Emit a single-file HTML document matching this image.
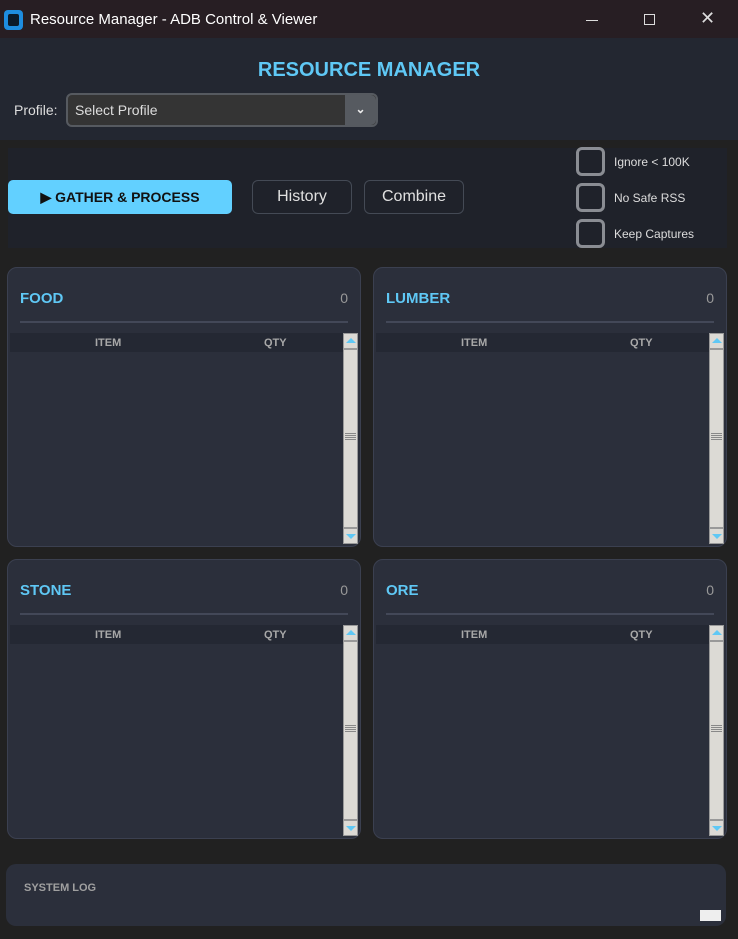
<!DOCTYPE html><html><head><style>
*{margin:0;padding:0;box-sizing:border-box}
body{width:738px;height:939px;background:#212121;font-family:"Liberation Sans",sans-serif;position:relative;overflow:hidden;color:#ddd}
.abs{position:absolute}
.tb{left:0;top:0;width:738px;height:38px;background:#271e23}
.hd{left:0;top:38px;width:738px;height:102px;background:#232731}
.card{background:#2b2f3b;border:1px solid #3b4050;border-radius:10px;width:354px;height:280px}
.ct{position:absolute;left:12px;top:22px;font-weight:bold;color:#5fc8f5;font-size:15px}
.cn{position:absolute;right:12px;top:22px;color:#999;font-size:14px}
.ln{position:absolute;left:12px;right:12px;top:53px;height:2px;background:#434858}
.th{position:absolute;left:2px;width:335px;top:65px;height:19px;background:#242833;font-size:11px;font-weight:bold;color:#a8a8a8}
.sb{position:absolute;left:335px;top:65px;width:15px;height:211px;background:#dcdad5;border:1px solid #999}
.sb .u,.sb .d{position:absolute;left:2px;width:0;height:0;border-left:5px solid transparent;border-right:5px solid transparent}
.sb .u{top:4px;border-bottom:5px solid #5fc8f5}
.sb .d{bottom:4px;border-top:5px solid #5fc8f5}
.sb .g{position:absolute;left:1px;right:1px;top:99px;height:8px;background:repeating-linear-gradient(#888 0 1px,transparent 1px 2px)}
.sb .h1{position:absolute;left:0;right:0;top:14px;height:2px;background:#999}
.sb .h2{position:absolute;left:0;right:0;bottom:14px;height:2px;background:#999}
.btn{border:1px solid #444a55;border-radius:6px;background:#1f222a;color:#e0e0e0;font-size:16px;text-align:center;line-height:32px;height:34px}
.cb{width:29px;height:29px;border:3px solid #8a8d93;border-radius:6px}
.cl{font-size:12px;color:#ddd}
</style></head><body>
<div class="abs tb"></div>
<div class="abs" style="left:4px;top:10px;width:19px;height:20px;background:#1e8de0;border-radius:4px"><div style="margin:4px;width:11px;height:12px;background:#0b1a2a;border-radius:2px"></div></div>
<div class="abs" style="left:30px;top:11px;font-size:15px;color:#fff">Resource Manager - ADB Control &amp; Viewer</div>
<div class="abs" style="left:586px;top:20px;width:12px;height:1px;background:#ddd"></div>
<div class="abs" style="left:644px;top:14px;width:11px;height:11px;border:1px solid #ddd"></div>
<div class="abs" style="left:700px;top:8px;font-size:18px;color:#ddd">✕</div>
<div class="abs hd"></div>
<div class="abs" style="left:0;width:738px;top:59px;text-align:center;font-size:20px;font-weight:bold;color:#5fc8f5">RESOURCE MANAGER</div>
<div class="abs" style="left:14px;top:102px;font-size:14px;color:#ddd">Profile:</div>
<div class="abs" style="left:66px;top:93px;width:312px;height:34px;background:#343434;border:2px solid #565a60;border-radius:6px"></div>
<div class="abs" style="left:345px;top:95px;width:31px;height:30px;background:#565a60;border-radius:0 5px 5px 0;color:#eee;font-size:12px;font-weight:bold;text-align:center;line-height:28px">⌄</div>
<div class="abs" style="left:75px;top:102px;font-size:14px;color:#ddd">Select Profile</div>
<div class="abs" style="left:8px;top:148px;width:719px;height:100px;background:#1f222a"></div>
<div class="abs" style="left:8px;top:180px;width:224px;height:34px;background:#62d0ff;border-radius:5px;color:#111;font-weight:bold;font-size:14px;text-align:center;line-height:34px">▶ GATHER &amp; PROCESS</div>
<div class="abs btn" style="left:252px;top:180px;width:100px">History</div>
<div class="abs btn" style="left:364px;top:180px;width:100px">Combine</div>
<div class="abs cb" style="left:576px;top:147px"></div><div class="abs cl" style="left:614px;top:155px">Ignore &lt; 100K</div>
<div class="abs cb" style="left:576px;top:183px"></div><div class="abs cl" style="left:614px;top:191px">No Safe RSS</div>
<div class="abs cb" style="left:576px;top:219px"></div><div class="abs cl" style="left:614px;top:227px">Keep Captures</div>

<div class="abs card" style="left:7px;top:267px"><div class="ct">FOOD</div><div class="cn">0</div><div class="ln"></div><div class="th"><span class="abs" style="left:85px;top:4px">ITEM</span><span class="abs" style="left:254px;top:4px">QTY</span></div><div class="sb"><div class="u"></div><div class="h1"></div><div class="g"></div><div class="h2"></div><div class="d"></div></div></div>
<div class="abs card" style="left:373px;top:267px"><div class="ct">LUMBER</div><div class="cn">0</div><div class="ln"></div><div class="th"><span class="abs" style="left:85px;top:4px">ITEM</span><span class="abs" style="left:254px;top:4px">QTY</span></div><div class="sb"><div class="u"></div><div class="h1"></div><div class="g"></div><div class="h2"></div><div class="d"></div></div></div>
<div class="abs card" style="left:7px;top:559px"><div class="ct">STONE</div><div class="cn">0</div><div class="ln"></div><div class="th"><span class="abs" style="left:85px;top:4px">ITEM</span><span class="abs" style="left:254px;top:4px">QTY</span></div><div class="sb"><div class="u"></div><div class="h1"></div><div class="g"></div><div class="h2"></div><div class="d"></div></div></div>
<div class="abs card" style="left:373px;top:559px"><div class="ct">ORE</div><div class="cn">0</div><div class="ln"></div><div class="th"><span class="abs" style="left:85px;top:4px">ITEM</span><span class="abs" style="left:254px;top:4px">QTY</span></div><div class="sb"><div class="u"></div><div class="h1"></div><div class="g"></div><div class="h2"></div><div class="d"></div></div></div>

<div class="abs" style="left:6px;top:864px;width:720px;height:62px;background:#2b2f3b;border-radius:10px"></div>
<div class="abs" style="left:24px;top:882px;font-size:11px;font-weight:bold;color:#a0a0a0">SYSTEM LOG</div>
<div class="abs" style="left:700px;top:910px;width:21px;height:11px;background:#eee"></div>
</body></html>
